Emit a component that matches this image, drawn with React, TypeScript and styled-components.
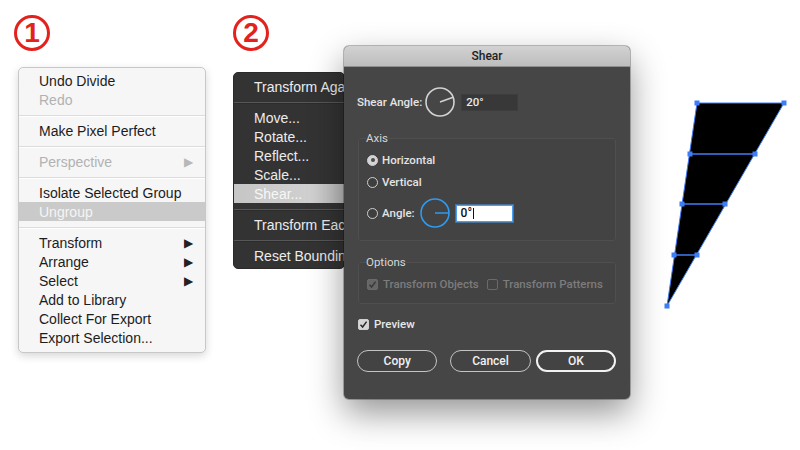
import styled, { createGlobalStyle } from 'styled-components';

const GlobalStyle = createGlobalStyle`
  html, body {
    margin: 0;
    padding: 0;
    background: #fff;
  }
  body {
    width: 800px;
    height: 450px;
    overflow: hidden;
    font-family: "Liberation Sans", Arial, sans-serif;
  }
`;

const Canvas = styled.div`
  position: relative;
  width: 800px;
  height: 450px;
  background: #fff;
`;

const StepBadge = styled.div<{ $x: number }>`
  position: absolute;
  left: ${(p) => p.$x}px;
  top: 15px;
  width: 30px;
  height: 30px;
  border: 3px solid #e3221d;
  border-radius: 50%;
  display: flex;
  align-items: center;
  justify-content: center;
  color: #e3221d;
  font: bold 28px/1 "Liberation Sans", Arial, sans-serif;
`;

/* ---------- context menus ---------- */

const Menu = styled.ul<{ $dark?: boolean }>`
  position: absolute;
  margin: 0;
  list-style: none;
  border-radius: 5px;
  font-size: 14px;
  ${(p) =>
    p.$dark
      ? `
    left: 233px;
    top: 72px;
    width: 110px;
    padding: 4px 0 3px;
    background: #333333;
    border: 1px solid #2a2a2a;
    color: #ececec;
    overflow: hidden;
  `
      : `
    left: 18px;
    top: 67px;
    width: 186px;
    padding: 3px 0 5px;
    background: #f6f6f6;
    border: 1px solid #c8c8c8;
    color: #1c1c1c;
    box-shadow: 0 3px 9px rgba(0, 0, 0, 0.16);
  `}
`;

const Item = styled.li<{ $state?: 'off' | 'on'; $dark?: boolean }>`
  height: 19px;
  display: flex;
  align-items: center;
  justify-content: space-between;
  padding: 0 12px 0 20px;
  white-space: nowrap;
  ${(p) => p.$state === 'off' && 'color: #b2b2b2;'}
  ${(p) =>
    p.$state === 'on' &&
    (p.$dark
      ? 'background: linear-gradient(90deg, #c6c6c6, #d0d0d0 70%, #bdbdbd); color: #f7f7f7;'
      : 'background: #cacaca; color: #f5f5f5;')}
`;

const Arrow = styled.span<{ $off?: boolean }>`
  font-size: 12px;
  color: ${(p) => (p.$off ? '#b8b8b8' : '#222')};
`;

const Divider = styled.li<{ $dark?: boolean }>`
  height: 12px;
  display: flex;
  align-items: center;
  &::after {
    content: '';
    flex: 1;
    height: 1px;
    background: ${(p) => (p.$dark ? '#575757' : '#dcdcdc')};
    box-shadow: ${(p) => (p.$dark ? '0 1px 0 #2c2c2c' : '0 1px 0 #fff')};
  }
`;

/* ---------- Shear dialog ---------- */

const Dialog = styled.div`
  position: absolute;
  left: 344px;
  top: 46px;
  width: 286px;
  z-index: 2;
  display: flex;
  flex-direction: column;
  background: #464646;
  border-radius: 5px;
  box-shadow: 0 14px 34px rgba(0, 0, 0, 0.42), 0 0 0 1px rgba(0, 0, 0, 0.25);
  font-family: Roboto, "Liberation Sans", Arial, sans-serif;
  font-weight: 500;
  font-size: 11.5px;
  color: #e4e4e4;
  overflow: hidden;
`;

const TitleBar = styled.div`
  height: 20px;
  display: flex;
  align-items: center;
  justify-content: center;
  background: linear-gradient(#d2d2d2, #bdbdbd);
  border-bottom: 1px solid #8e8e8e;
  color: #1e1e1e;
  font-size: 12px;
`;

const Body = styled.div`
  display: flex;
  flex-direction: column;
  padding: 20px 14px 27px;
`;

const Row = styled.div<{ $h?: number }>`
  display: flex;
  align-items: center;
  height: ${(p) => p.$h ?? 18}px;
`;

const AngleLabel = styled.span`
  margin-left: -1px;
  margin-right: 3px;
`;

const Field = styled.div<{ $focus?: boolean }>`
  box-sizing: border-box;
  width: 57px;
  height: 17px;
  display: flex;
  align-items: center;
  padding-left: 4px;
  ${(p) =>
    p.$focus
      ? `
    background: #fff;
    color: #111;
    border: 1px solid #4a9ff0;
    box-shadow: 0 0 0 1px rgba(74, 159, 240, 0.5);
    font-size: 12px;
  `
      : `
    background: #383838;
    border: 1px solid #3d3d3d;
    color: #eaeaea;
  `}
`;

const Caret = styled.span`
  display: inline-block;
  width: 1px;
  height: 11px;
  background: #111;
  margin-left: 1px;
`;

const Group = styled.fieldset<{ $gap: number; $pad: string }>`
  display: flex;
  flex-direction: column;
  margin: ${(p) => p.$gap}px 0 0;
  padding: ${(p) => p.$pad};
  border: 1px solid #4f4f4f;
  background: #434343;
  border-radius: 3px;
  min-width: 0;
`;

const Legend = styled.legend`
  height: 14px;
  line-height: 14px;
  padding: 0;
  margin-left: -1px;
  color: #d6d6d6;
  font-weight: 400;
`;

const Radio = styled.span<{ $on?: boolean }>`
  width: 9px;
  height: 9px;
  border-radius: 50%;
  border: 1px solid #cfcfcf;
  margin-right: 4px;
  display: flex;
  align-items: center;
  justify-content: center;
  background: ${(p) => (p.$on ? '#d4d4d4' : '#3e3e3e')};
  &::after {
    content: '';
    width: 4px;
    height: 4px;
    border-radius: 50%;
    background: ${(p) => (p.$on ? '#4a4a4a' : 'transparent')};
  }
`;

const Check = styled.span<{ $on?: boolean; $off?: boolean }>`
  width: 9px;
  height: 9px;
  border-radius: 2px;
  margin-right: 5px;
  display: flex;
  align-items: center;
  justify-content: center;
  border: 1px solid ${(p) => (p.$off ? '#6a6a6a' : '#d0d0d0')};
  background: ${(p) => (p.$off ? (p.$on ? '#666' : 'transparent') : '#d6d6d6')};
`;

const CheckLabel = styled.span<{ $off?: boolean; $gap?: number }>`
  color: ${(p) => (p.$off ? '#7c7c7c' : '#e8e8e8')};
  margin-right: ${(p) => p.$gap ?? 0}px;
`;

const Spacer = styled.span<{ $w: number }>`
  width: ${(p) => p.$w}px;
`;

const Buttons = styled.div`
  display: flex;
  margin-top: 18px;
  margin-left: -1px;
`;

const Button = styled.div<{ $primary?: boolean; $gap?: number }>`
  box-sizing: border-box;
  width: 81px;
  height: 22px;
  border-radius: 11px;
  margin-right: ${(p) => p.$gap ?? 0}px;
  display: flex;
  align-items: center;
  justify-content: center;
  color: #f0f0f0;
  font-size: 12px;
  background: #434343;
  border: ${(p) => (p.$primary ? '2px solid #f2f2f2' : '1.5px solid #c4c4c4')};
`;

/* ---------- artwork ---------- */

const Artwork = styled.svg`
  position: absolute;
  left: 660px;
  top: 95px;
`;

function Dial({ color, angle }: { color: string; angle: number }) {
  const r = 14;
  const a = (angle * Math.PI) / 180;
  const x = 15 + r * Math.cos(a);
  const y = 15 - r * Math.sin(a);
  return (
    <svg width="30" height="30" viewBox="0 0 30 30">
      <circle cx="15" cy="15" r={r} fill="none" stroke={color} strokeWidth="1.6" />
      <line x1="15" y1="15" x2={x} y2={y} stroke={color} strokeWidth="1.6" />
    </svg>
  );
}

function Tick({ color }: { color: string }) {
  return (
    <svg width="9" height="9" viewBox="0 0 9 9">
      <polyline points="1.5,4.8 3.6,7 7.6,1.6" fill="none" stroke={color} strokeWidth="1.5" />
    </svg>
  );
}

const lightItems: (string | { t: string; state?: 'off' | 'on'; sub?: boolean } | null)[] = [
  'Undo Divide',
  { t: 'Redo', state: 'off' },
  null,
  'Make Pixel Perfect',
  null,
  { t: 'Perspective', state: 'off', sub: true },
  null,
  'Isolate Selected Group',
  { t: 'Ungroup', state: 'on' },
  null,
  { t: 'Transform', sub: true },
  { t: 'Arrange', sub: true },
  { t: 'Select', sub: true },
  'Add to Library',
  'Collect For Export',
  'Export Selection...',
];

const darkItems: (string | null)[] = [
  'Transform Again',
  null,
  'Move...',
  'Rotate...',
  'Reflect...',
  'Scale...',
  'Shear...',
  null,
  'Transform Each...',
  null,
  'Reset Bounding Box',
];

// shape points, relative to the artwork box (660, 95)
const P = (x: number, y: number) => [x - 660, y - 95] as const;
const outline = [P(697, 103), P(784, 103), P(667, 306)];
const rungs = [
  [P(690, 154), P(755, 154)],
  [P(682, 204), P(725, 204)],
  [P(674, 255), P(697, 255)],
];

export default function App() {
  return (
    <Canvas>
      <GlobalStyle />
      <StepBadge $x={14}>1</StepBadge>
      <StepBadge $x={233}>2</StepBadge>

      <Menu>
        {lightItems.map((it, i) => {
          if (it === null) return <Divider key={i} />;
          const item = typeof it === 'string' ? { t: it } : it;
          return (
            <Item key={i} $state={item.state}>
              <span>{item.t}</span>
              {item.sub && <Arrow $off={item.state === 'off'}>▶</Arrow>}
            </Item>
          );
        })}
      </Menu>

      <Menu $dark>
        {darkItems.map((it, i) =>
          it === null ? (
            <Divider key={i} $dark />
          ) : (
            <Item key={i} $dark $state={it === 'Shear...' ? 'on' : undefined}>
              <span>{it}</span>
            </Item>
          ),
        )}
      </Menu>

      <Dialog>
        <TitleBar>Shear</TitleBar>
        <Body>
          <Row $h={30}>
            <AngleLabel>Shear Angle:</AngleLabel>
            <Dial color="#d2d2d2" angle={20} />
            <Spacer $w={6} />
            <Field>20°</Field>
          </Row>

          <Group $gap={14} $pad="6px 8px 12px">
            <Legend>Axis</Legend>
            <Row>
              <Radio $on />
              <span>Horizontal</span>
            </Row>
            <Row style={{ marginTop: 4 }}>
              <Radio />
              <span>Vertical</span>
            </Row>
            <Row $h={30} style={{ marginTop: 7 }}>
              <Radio />
              <span>Angle:</span>
              <Spacer $w={5} />
              <Dial color="#2f9af0" angle={0} />
              <Spacer $w={6} />
              <Field $focus>
                0°<Caret />
              </Field>
            </Row>
          </Group>

          <Group $gap={14} $pad="7px 8px 11px">
            <Legend>Options</Legend>
            <Row $h={16}>
              <Check $on $off>
                <Tick color="#3a3a3a" />
              </Check>
              <CheckLabel $off $gap={8}>Transform Objects</CheckLabel>
              <Check $off />
              <CheckLabel $off>Transform Patterns</CheckLabel>
            </Row>
          </Group>

          <Row $h={16} style={{ marginTop: 12 }}>
            <Check $on>
              <Tick color="#2a2a2a" />
            </Check>
            <CheckLabel>Preview</CheckLabel>
          </Row>

          <Buttons>
            <Button $gap={13}>Copy</Button>
            <Button $gap={5}>Cancel</Button>
            <Button $primary>OK</Button>
          </Buttons>
        </Body>
      </Dialog>

      <Artwork width="130" height="220" viewBox="0 0 130 220">
        <polygon
          points={outline.map((p) => p.join(',')).join(' ')}
          fill="#000"
          stroke="#3f7df5"
          strokeWidth="1"
        />
        {rungs.map(([a, b], i) => (
          <line key={i} x1={a[0]} y1={a[1]} x2={b[0]} y2={b[1]} stroke="#3f7df5" strokeWidth="1.5" />
        ))}
        {[...outline, ...rungs.flat()].map(([x, y], i) => (
          <rect key={i} x={x - 2.5} y={y - 2.5} width="5" height="5" fill="#3f7df5" />
        ))}
      </Artwork>
    </Canvas>
  );
}
